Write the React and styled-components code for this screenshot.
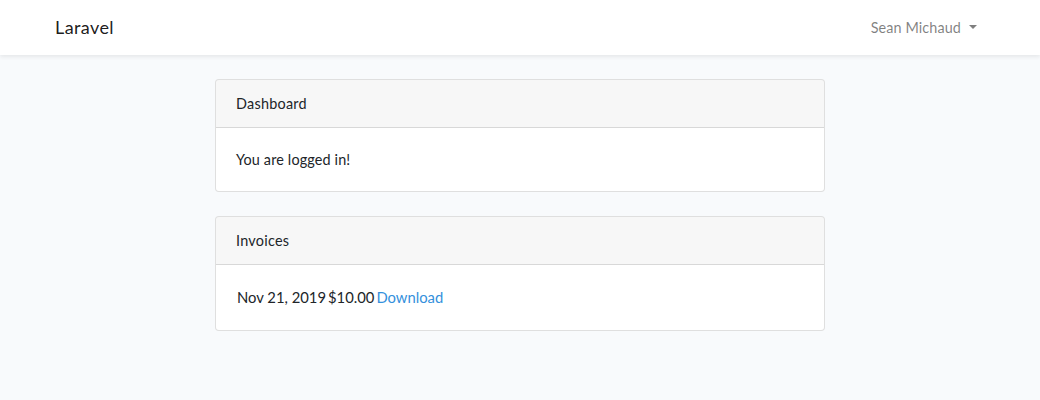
import React from 'react';
import styled, { createGlobalStyle } from 'styled-components';

const GlobalStyle = createGlobalStyle`
  * { box-sizing: border-box; }
  body {
    margin: 0;
    background-color: #f8fafc;
    font-family: "Lato", "Noto Sans", sans-serif;
    font-size: 14.4px;
    line-height: 1.6;
    color: #212529;
    letter-spacing: 0.15px;
  }
`

const Navbar = styled.nav`
  background: #fff;
  box-shadow: 0 2px 4px rgba(0, 0, 0, 0.075);
  padding: 8px 0;
`

const Container = styled.div`
  width: 960px;
  margin: 0 auto;
  padding: 0 15px;
  display: flex;
  align-items: center;
  justify-content: space-between;
`

const Brand = styled.a`
  font-size: 18px;
  line-height: 28.8px;
  padding: 5.12px 0;
  letter-spacing: 0.4px;
  color: rgba(0, 0, 0, 0.9);
  text-decoration: none;
`

const UserToggle = styled.a`
  padding: 8px;
  color: rgba(0, 0, 0, 0.5);
  text-decoration: none;
  letter-spacing: 0.1px;
  &::after {
    content: "";
    display: inline-block;
    vertical-align: 0.255em;
    border-top: 0.3em solid;
    border-right: 0.3em solid transparent;
    border-left: 0.3em solid transparent;
    margin-left: 8px;
  }
`

const Main = styled.main`
  padding: 24px 0;
`

const Column = styled.div`
  width: 610px;
  margin: 0 auto;
  display: flex;
  flex-direction: column;
  gap: 24px;
`

const Card = styled.div`
  background: #fff;
  border: 1px solid rgba(0, 0, 0, 0.125);
  border-radius: 4px;
  overflow: hidden;
`

const CardHeader = styled.div`
  padding: 12px 20px;
  background: rgba(0, 0, 0, 0.03);
  border-bottom: 1px solid rgba(0, 0, 0, 0.125);
  letter-spacing: 0.25px;
`

const CardBody = styled.div`
  padding: 20px;
`

const Table = styled.table`
  border-collapse: collapse;
  font-size: 14.8px;
  line-height: 23px;
  letter-spacing: 0;
  td { padding: 1px; }
`

const Link = styled.a`
  color: #3490dc;
  text-decoration: none;
`

export default function App() {
  return (
    <>
      <GlobalStyle />
      <Navbar>
        <Container>
          <Brand href="#">Laravel</Brand>
          <UserToggle href="#">Sean Michaud</UserToggle>
        </Container>
      </Navbar>
      <Main>
        <Column>
          <Card>
            <CardHeader>Dashboard</CardHeader>
            <CardBody>You are logged in!</CardBody>
          </Card>
          <Card>
            <CardHeader>Invoices</CardHeader>
            <CardBody>
              <Table>
                <tbody>
                  <tr>
                    <td>Nov 21, 2019</td>
                    <td>$10.00</td>
                    <td><Link href="#">Download</Link></td>
                  </tr>
                </tbody>
              </Table>
            </CardBody>
          </Card>
        </Column>
      </Main>
    </>
  );
}
